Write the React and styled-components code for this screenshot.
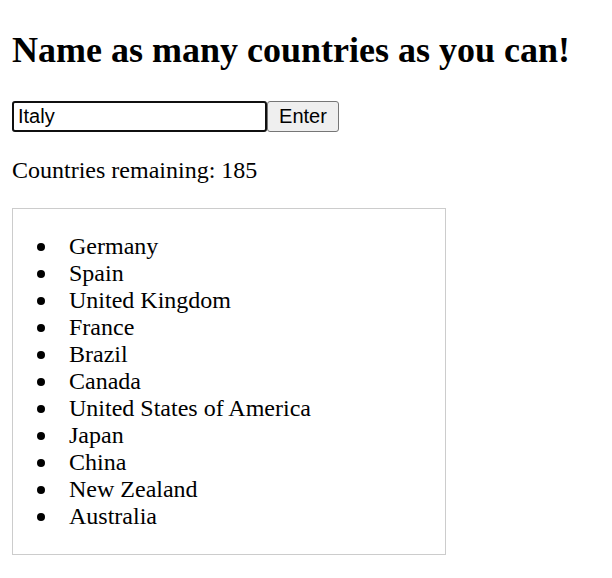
import React, { useState } from "react";
import styled, { createGlobalStyle } from "styled-components";

const GlobalStyle = createGlobalStyle`
  body {
    margin: 0;
    padding: 0 12px 12px;
    font-family: "Liberation Serif", "Times New Roman", serif;
    color: #000;
    background: #fff;
  }
`;

const Title = styled.h2`
  font-size: 36px;
  font-weight: bold;
  margin: 30px 0;
  line-height: 41px;
`;

const EntryForm = styled.form`
  display: flex;
  align-items: stretch;
  height: 31px;
`;

const CountryInput = styled.input`
  width: 255px;
  box-sizing: border-box;
  border: 2px solid #101010;
  border-radius: 3px;
  padding: 0 4px;
  font-family: "Liberation Sans", Arial, sans-serif;
  font-size: 20px;
  color: #000;
  outline: none;
`;

const EnterButton = styled.button`
  width: 72px;
  box-sizing: border-box;
  border: 1px solid #767676;
  border-radius: 3px;
  background-color: #efefef;
  font-family: "Liberation Sans", Arial, sans-serif;
  font-size: 20px;
  color: #000;
  padding: 0;
  cursor: pointer;
`;

const Remaining = styled.p`
  font-size: 24px;
  line-height: 28px;
  margin: 24px 0;
`;

const ListBox = styled.div`
  width: 434px;
  box-sizing: border-box;
  border: 1px solid #cccccc;
`;

const CountryList = styled.ul`
  margin: 24px 0;
  padding-left: 24px;
  list-style: none;
`;

const CountryItem = styled.li`
  display: flex;
  align-items: center;
  font-size: 24px;
  line-height: 27px;

  &::before {
    content: "";
    flex: none;
    width: 8px;
    height: 8px;
    border-radius: 50%;
    background: #000;
    margin-right: 24px;
  }
`;

export default function App() {
  const [guess, setGuess] = useState("Italy");
  const named = [
    "Germany",
    "Spain",
    "United Kingdom",
    "France",
    "Brazil",
    "Canada",
    "United States of America",
    "Japan",
    "China",
    "New Zealand",
    "Australia",
  ];

  return (
    <>
      <GlobalStyle />
      <Title>Name as many countries as you can!</Title>
      <EntryForm onSubmit={(e) => e.preventDefault()}>
        <CountryInput value={guess} onChange={(e) => setGuess(e.target.value)} />
        <EnterButton type="submit">Enter</EnterButton>
      </EntryForm>
      <Remaining>Countries remaining: 185</Remaining>
      <ListBox>
        <CountryList>
          {named.map((country) => (
            <CountryItem key={country}>{country}</CountryItem>
          ))}
        </CountryList>
      </ListBox>
    </>
  );
}
